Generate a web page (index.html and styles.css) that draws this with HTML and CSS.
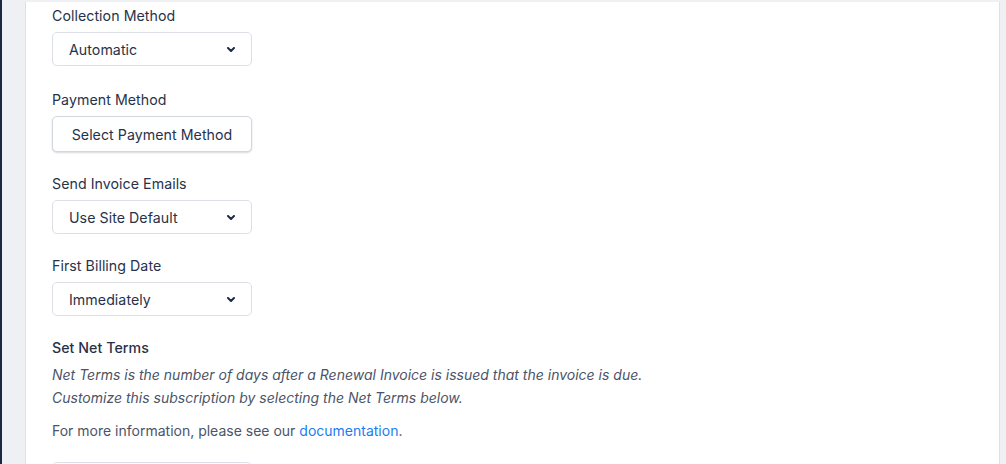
FILE: index.html
```html
<!DOCTYPE html>
<html lang="en">
<head>
	<meta charset="UTF-8">
	<title>Subscription</title>
	<link rel="stylesheet" href="styles.css">
</head>
<body>
<div class="page">
	<div class="panel">
		<div class="field first">
			<label class="field-label">Collection Method</label>
			<div class="select">
				<span>Automatic</span>
				<svg class="chevron" viewBox="0 0 8 5" width="8" height="5"><path d="M1 1l3 3 3-3" fill="none" stroke="#1f2b45" stroke-width="2" stroke-linecap="round" stroke-linejoin="round"/></svg>
			</div>
		</div>
		<div class="field">
			<label class="field-label">Payment Method</label>
			<button class="btn">Select Payment Method</button>
		</div>
		<div class="field">
			<label class="field-label">Send Invoice Emails</label>
			<div class="select">
				<span>Use Site Default</span>
				<svg class="chevron" viewBox="0 0 8 5" width="8" height="5"><path d="M1 1l3 3 3-3" fill="none" stroke="#1f2b45" stroke-width="2" stroke-linecap="round" stroke-linejoin="round"/></svg>
			</div>
		</div>
		<div class="field">
			<label class="field-label">First Billing Date</label>
			<div class="select">
				<span>Immediately</span>
				<svg class="chevron" viewBox="0 0 8 5" width="8" height="5"><path d="M1 1l3 3 3-3" fill="none" stroke="#1f2b45" stroke-width="2" stroke-linecap="round" stroke-linejoin="round"/></svg>
			</div>
		</div>
		<div class="field">
			<label class="field-label strong">Set Net Terms</label>
			<p class="hint">Net Terms is the number of days after a Renewal Invoice is issued that the invoice is due.<br>Customize this subscription by selecting the Net Terms below.</p>
			<p class="info">For more information, please see our <a href="#">documentation</a>.</p>
			<div class="select"></div>
		</div>
	</div>
</div>
</body>
</html>
```

FILE: styles.css
```css
*{
	margin: 0;
	padding: 0;
	box-sizing: border-box;
}
body{
	background: #eef0f4;
	border-left: 2px solid #1c2741;
	height: 464px;
	overflow: hidden;
	font-family: Inter, "Noto Sans", sans-serif;
	color: #27324a;
}
.page{
	padding: 2px 6px 0 23px;
}
.panel{
	background: #fff;
	border-left: 1px solid #dde0e7;
	border-right: 1px solid #dde0e7;
	padding: 4px 26px 0;
	height: 470px;
	overflow: hidden;
}
.field{
	margin-bottom: 22px;
}
.field.first{
	margin-bottom: 24px;
}
.field-label{
	display: block;
	font-size: 14.2px;
	letter-spacing: 0.05px;
	line-height: 20px;
	margin-bottom: 6px;
}
.field-label.strong{
	font-weight: 500;
	margin-bottom: 5px;
}
.select{
	display: flex;
	align-items: center;
	justify-content: space-between;
	width: 200px;
	height: 34px;
	padding: 0 16px 0 16px;
	border: 1px solid #dcdfe6;
	border-radius: 5px;
	font-size: 14.2px;
	letter-spacing: 0.05px;
	color: #27324a;
}
.btn{
	display: block;
	width: 200px;
	height: 36px;
	border: 1px solid #d3d7df;
	border-radius: 5px;
	background: #fff;
	box-shadow: 0 1px 2px rgba(30, 40, 60, 0.18);
	font-family: inherit;
	font-size: 14.2px;
	letter-spacing: 0.05px;
	color: #27324a;
}
.hint{
	font-size: 14px;
	font-style: italic;
	line-height: 23px;
	color: #4b5468;
}
.info{
	margin-top: 12px;
	font-size: 14px;
	line-height: 20px;
	color: #4b5468;
}
.info a{
	color: #1b7cf0;
	text-decoration: none;
}
.field .info + .select{
	margin-top: 21px;
}
```
